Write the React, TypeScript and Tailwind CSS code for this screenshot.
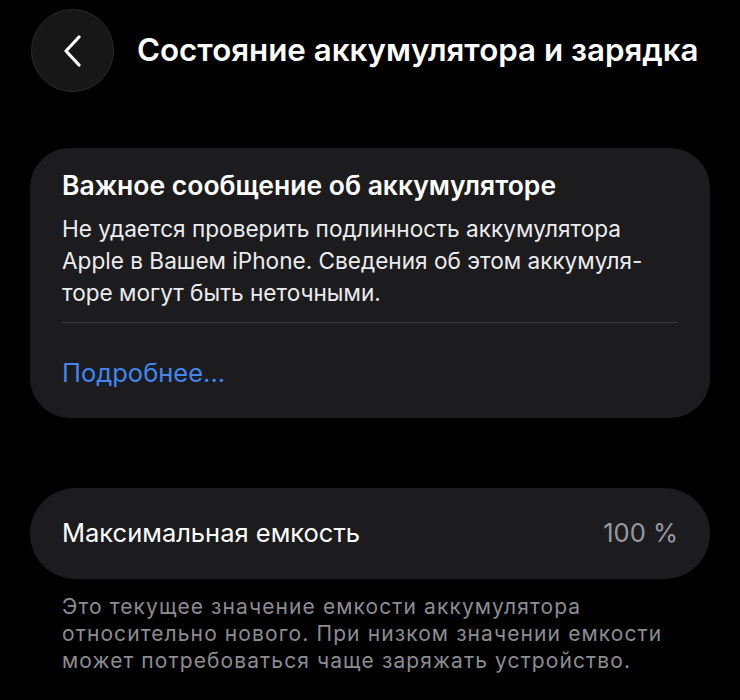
import React from "react";

const font = { fontFamily: "Inter, Roboto, 'Noto Sans', sans-serif" };

function BackButton() {
  return (
    <button
      type="button"
      className="flex h-[83px] w-[83px] shrink-0 items-center justify-center rounded-full border border-[#2a2a2c] bg-[#171717]"
    >
      <svg width="20" height="32" viewBox="0 0 20 32" fill="none">
        <path
          d="M16 2 L3 16 L16 30"
          stroke="white"
          strokeWidth="3.2"
          strokeLinecap="round"
          strokeLinejoin="round"
        />
      </svg>
    </button>
  );
}

export default function App() {
  return (
    <div className="min-h-[700px] w-[740px] bg-black text-white" style={font}>
      {/* Header */}
      <div className="flex items-center gap-[23px] pl-[31px] pt-[9px]">
        <BackButton />
        <h1 className="text-[31.3px] font-semibold text-white">
          Состояние аккумулятора и зарядка
        </h1>
      </div>

      {/* Warning card */}
      <div className="mx-[30px] mt-[56px] rounded-[40px] bg-[#1c1c1e] px-[32px] pb-[30px] pt-[22px]">
        <h2 className="text-[26.5px] font-semibold leading-[30px] text-white">
          Важное сообщение об аккумуляторе
        </h2>
        <p className="mt-[13px] text-[22.6px] leading-[32px] text-[#ececee]">
          Не удается проверить подлинность аккумулятора
          <br />
          Apple в Вашем iPhone. Сведения об этом аккумуля-
          <br />
          торе могут быть неточными.
        </p>
        <div className="mt-[13px] h-px bg-[#3a3a3c]" />
        <div className="mt-[35px] text-[25.5px] leading-[30px] text-[#4386ef]">
          Подробнее...
        </div>
      </div>

      {/* Capacity */}
      <div className="mx-[30px] mt-[70px] flex h-[91px] items-center justify-between rounded-full bg-[#1c1c1e] px-[32px]">
        <span className="text-[25.5px] text-white">Максимальная емкость</span>
        <span className="text-[25.5px] text-[#98989e]">100 %</span>
      </div>

      <p className="mt-[14px] px-[62px] text-[21px] leading-[27px] tracking-[1.1px] text-[#8c8c91]">
        Это текущее значение емкости аккумулятора
        <br />
        относительно нового. При низком значении емкости
        <br />
        может потребоваться чаще заряжать устройство.
      </p>
    </div>
  );
}
